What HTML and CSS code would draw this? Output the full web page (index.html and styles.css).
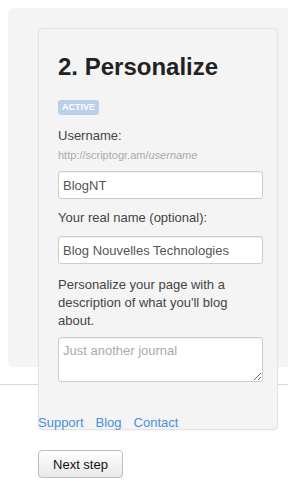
FILE: index.html
```html
<!DOCTYPE html>
<html>
<head>
<meta charset="utf-8">
<link rel="stylesheet" href="styles.css">
</head>
<body>
<div class="panel">
  <div class="card">
    <h1 class="title">2. Personalize</h1>
    <span class="badge">ACTIVE</span>
    <label class="label first">Username:</label>
    <div class="hint">http://scriptogr.am/<em>username</em></div>
    <input class="field gap-a" type="text" value="BlogNT">
    <label class="label second">Your real name (optional):</label>
    <input class="field gap-b" type="text" value="Blog Nouvelles Technologies">
    <p class="desc">Personalize your page with a description of what you'll blog about.</p>
    <textarea class="area" placeholder="Just another journal"></textarea>
  </div>
</div>
<hr class="rule">
<nav class="links">
  <a href="#">Support</a>
  <a href="#">Blog</a>
  <a href="#">Contact</a>
</nav>
<button class="next" type="button">Next step</button>
</body>
</html>
```
FILE: styles.css
```css
html, body {
  margin: 0;
  padding: 0;
  background: #ffffff;
  font-family: "Liberation Sans", Arial, sans-serif;
  overflow: hidden;
}

.panel {
  margin: 8px 0 0 8px;
  height: 359px;
  box-sizing: border-box;
  padding: 20px 0 0 30px;
  background: #f4f4f4;
  border-radius: 6px 0 0 6px;
}

.card {
  position: relative;
  width: 240px;
  height: 402px;
  box-sizing: border-box;
  padding: 24px 14px 0 19px;
  background: #f4f4f4;
  border: 1px solid #e2e2e2;
  border-radius: 4px;
  box-shadow: 0 1px 2px rgba(0, 0, 0, 0.04);
  display: flex;
  flex-direction: column;
  align-items: flex-start;
}

.title {
  margin: 0;
  font-size: 24px;
  line-height: 28px;
  font-weight: bold;
  color: #222;
}

.badge {
  margin-top: 19px;
  height: 15px;
  line-height: 15px;
  padding: 0 4px;
  font-size: 9px;
  font-weight: bold;
  color: #fff;
  background: #b9d0ea;
  border-radius: 3px;
}

.label {
  font-size: 13px;
  line-height: 18px;
  color: #444;
}

.label.first { margin-top: 12px; }
.label.second { margin-top: 10px; }

.hint {
  margin-top: 2px;
  font-size: 11px;
  line-height: 16px;
  color: #aaa;
}

.hint em { font-style: italic; }

.field {
  width: 205px;
  height: 28px;
  box-sizing: border-box;
  margin: 0;
  padding: 0 4px;
  font-family: "Liberation Sans", Arial, sans-serif;
  font-size: 13px;
  color: #555;
  background: #fff;
  border: 1px solid #ccc;
  border-radius: 3px;
  box-shadow: inset 0 1px 1px rgba(0, 0, 0, 0.06);
  outline: none;
}

.gap-a { margin-top: 8px; }
.gap-b { margin-top: 9px; }

.desc {
  margin: 12px 0 0 0;
  font-size: 13px;
  line-height: 18px;
  color: #444;
}

.area {
  margin-top: 7px;
  width: 205px;
  height: 45px;
  box-sizing: border-box;
  padding: 4px;
  font-family: "Liberation Sans", Arial, sans-serif;
  font-size: 13px;
  line-height: 18px;
  color: #555;
  background: #fff;
  border: 1px solid #ccc;
  border-radius: 3px;
  box-shadow: inset 0 1px 1px rgba(0, 0, 0, 0.06);
  resize: both;
  outline: none;
}

.area::placeholder { color: #aaa; }

.rule {
  margin: 17px 0 0 0;
  height: 0;
  border: 0;
  border-top: 1px solid #d9d9d9;
}

.links {
  position: relative;
  margin: 29px 0 0 38px;
  display: flex;
  gap: 12px;
  font-size: 13px;
  line-height: 18px;
}

.links a {
  color: #4a8fd9;
  text-decoration: none;
}

.next {
  display: block;
  margin: 18px 0 0 38px;
  width: 85px;
  height: 28px;
  padding: 0;
  font-family: "Liberation Sans", Arial, sans-serif;
  font-size: 13px;
  color: #111;
  background: linear-gradient(#ffffff, #e8e8e8);
  border: 1px solid #bdbdbd;
  border-radius: 4px;
  box-shadow: 0 1px 1px rgba(0, 0, 0, 0.06);
}
```
